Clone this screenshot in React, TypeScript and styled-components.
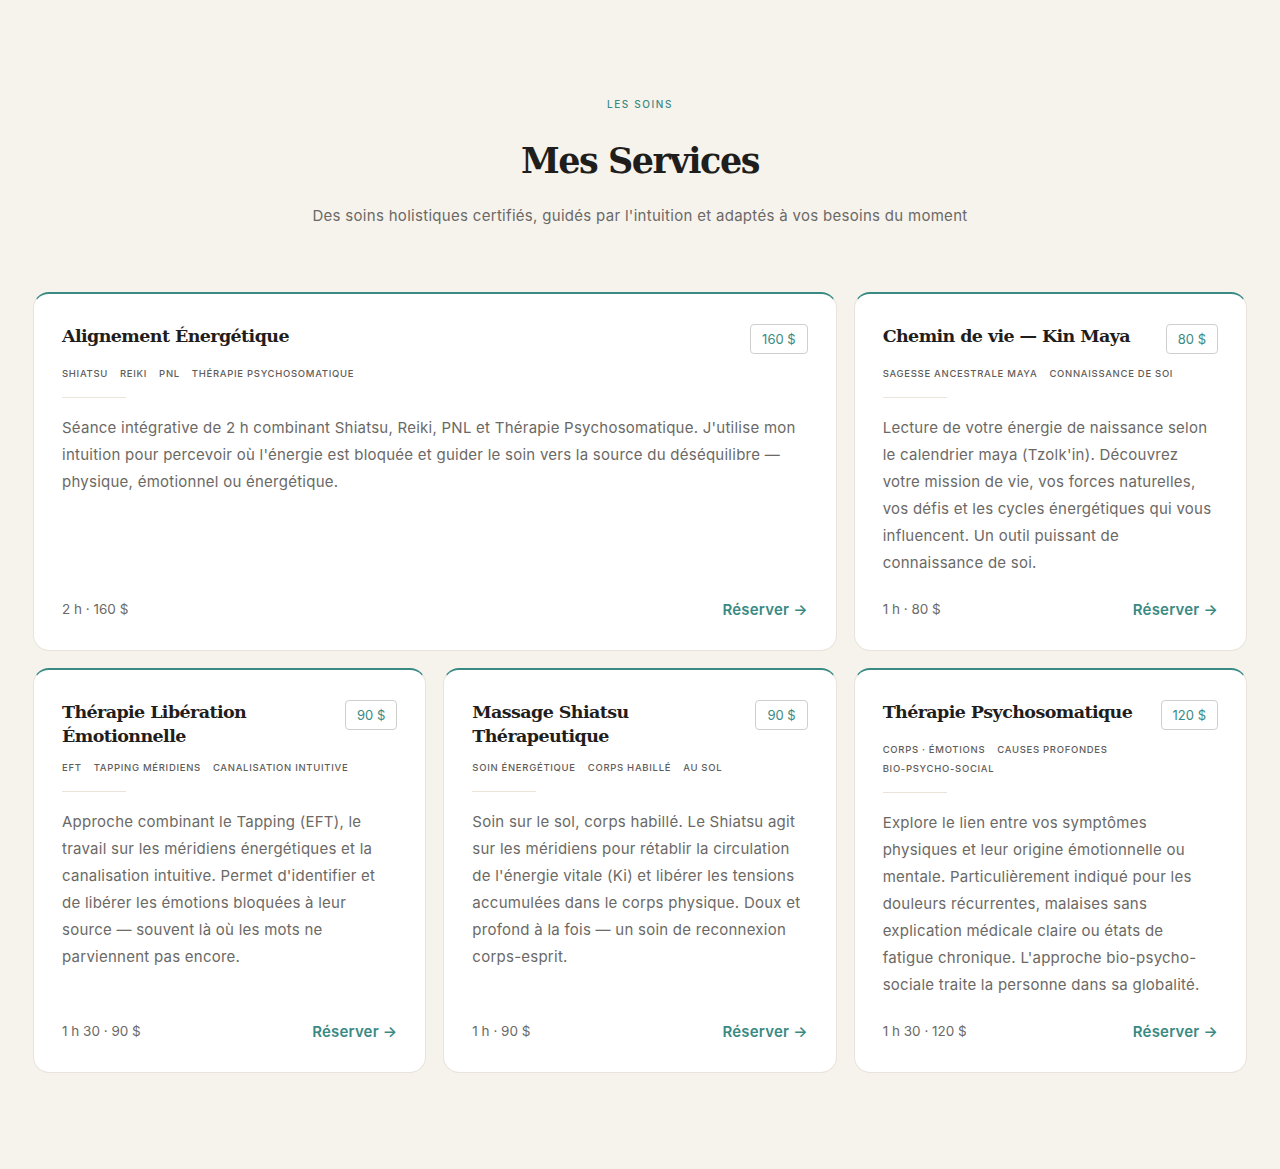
import React from 'react';
import styled, { createGlobalStyle } from 'styled-components';

type Service = {
	id: string;
	title: string;
	price: string;
	tags: string[];
	description: string;
	meta: string;
	wide?: boolean;
};

const services: Service[] = [
	{
		id: 'alignement',
		title: 'Alignement Énergétique',
		price: '160 $',
		tags: ['Shiatsu', 'Reiki', 'PNL', 'Thérapie psychosomatique'],
		description:
			"Séance intégrative de 2 h combinant Shiatsu, Reiki, PNL et Thérapie Psychosomatique. J'utilise mon intuition pour percevoir où l'énergie est bloquée et guider le soin vers la source du déséquilibre — physique, émotionnel ou énergétique.",
		meta: '2 h · 160 $',
		wide: true,
	},
	{
		id: 'kin-maya',
		title: 'Chemin de vie — Kin Maya',
		price: '80 $',
		tags: ['Sagesse ancestrale maya', 'Connaissance de soi'],
		description:
			"Lecture de votre énergie de naissance selon le calendrier maya (Tzolk'in). Découvrez votre mission de vie, vos forces naturelles, vos défis et les cycles énergétiques qui vous influencent. Un outil puissant de connaissance de soi.",
		meta: '1 h · 80 $',
	},
	{
		id: 'eft',
		title: 'Thérapie Libération Émotionnelle',
		price: '90 $',
		tags: ['EFT', 'Tapping méridiens', 'Canalisation intuitive'],
		description:
			"Approche combinant le Tapping (EFT), le travail sur les méridiens énergétiques et la canalisation intuitive. Permet d'identifier et de libérer les émotions bloquées à leur source — souvent là où les mots ne parviennent pas encore.",
		meta: '1 h 30 · 90 $',
	},
	{
		id: 'shiatsu',
		title: 'Massage Shiatsu Thérapeutique',
		price: '90 $',
		tags: ['Soin énergétique', 'Corps habillé', 'Au sol'],
		description:
			"Soin sur le sol, corps habillé. Le Shiatsu agit sur les méridiens pour rétablir la circulation de l'énergie vitale (Ki) et libérer les tensions accumulées dans le corps physique. Doux et profond à la fois — un soin de reconnexion corps-esprit.",
		meta: '1 h · 90 $',
	},
	{
		id: 'psychosomatique',
		title: 'Thérapie Psychosomatique',
		price: '120 $',
		tags: ['Corps · émotions', 'Causes profondes', 'Bio-psycho-social'],
		description:
			"Explore le lien entre vos symptômes physiques et leur origine émotionnelle ou mentale. Particulièrement indiqué pour les douleurs récurrentes, malaises sans explication médicale claire ou états de fatigue chronique. L'approche bio-psycho-sociale traite la personne dans sa globalité.",
		meta: '1 h 30 · 120 $',
	},
];

function App() {
	return (
		<>
			<GlobalStyle />
			<Section>
				<Header>
					<Eyebrow>Les soins</Eyebrow>
					<Title>Mes Services</Title>
					<Lead>
						Des soins holistiques certifiés, guidés par l'intuition et adaptés à vos besoins du moment
					</Lead>
				</Header>
				<Grid>
					{services.map((service) => (
						<Card key={service.id} $wide={service.wide}>
							<CardTop>
								<CardTitle>{service.title}</CardTitle>
								<Price>{service.price}</Price>
							</CardTop>
							<Tags>
								{service.tags.map((tag) => (
									<Tag key={tag}>{tag}</Tag>
								))}
							</Tags>
							<Divider />
							<Description>{service.description}</Description>
							<CardFooter>
								<Meta>{service.meta}</Meta>
								<BookLink href="#">Réserver →</BookLink>
							</CardFooter>
						</Card>
					))}
				</Grid>
			</Section>
		</>
	);
}

const GlobalStyle = createGlobalStyle`
	body {
		margin: 0;
		background: #f6f3ed;
		font-family: Inter, 'Open Sans', sans-serif;
		color: #1f1e1c;
	}
`;

const Section = styled.section`
	padding: 98px 33px 97px;
`;

const Header = styled.header`
	display: flex;
	flex-direction: column;
	align-items: center;
	text-align: center;
	margin-bottom: 67px;
`;

const Eyebrow = styled.span`
	font-size: 10px;
	letter-spacing: 1.6px;
	text-transform: uppercase;
	color: #3a8a84;
	font-weight: 500;
`;

const Title = styled.h2`
	margin: 32px 0 0;
	font-family: 'DejaVu Serif', 'Liberation Serif', serif;
	font-size: 35px;
	font-weight: 700;
	letter-spacing: -1.5px;
	line-height: 1.1;
`;

const Lead = styled.p`
	margin: 25px 0 0;
	font-size: 15px;
	letter-spacing: 0.3px;
	color: #6b6966;
`;

const Grid = styled.div`
	display: grid;
	grid-template-columns: repeat(3, 1fr);
	gap: 17px;
`;

const Card = styled.article<{ $wide?: boolean }>`
	grid-column: ${(p) => (p.$wide ? 'span 2' : 'span 1')};
	display: flex;
	flex-direction: column;
	background: #ffffff;
	border: 1px solid #e9e3db;
	border-top: 2px solid #3a8a84;
	border-radius: 16px;
	padding: 29px 28px 31px;
`;

const CardTop = styled.div`
	display: flex;
	justify-content: space-between;
	align-items: flex-start;
	gap: 20px;
`;

const CardTitle = styled.h3`
	margin: 1px 0 0;
	font-family: 'DejaVu Serif', 'Liberation Serif', serif;
	font-size: 17.5px;
	font-weight: 700;
	letter-spacing: -0.6px;
	line-height: 24px;
`;

const Price = styled.span`
	flex-shrink: 0;
	margin-top: 1px;
	border: 1px solid #cfd0cd;
	border-radius: 4px;
	padding: 7px 11px;
	font-size: 13px;
	color: #3a8a84;
	line-height: 14px;
`;

const Tags = styled.div`
	display: flex;
	flex-wrap: wrap;
	gap: 6px 12px;
	margin-top: 13px;
`;

const Tag = styled.span`
	font-size: 9.5px;
	letter-spacing: 0.7px;
	text-transform: uppercase;
	color: #5f5d5a;
	font-weight: 500;
	line-height: 13px;
`;

const Divider = styled.hr`
	width: 64px;
	margin: 17px 0 0;
	border: none;
	border-top: 1px solid #ebe2d9;
`;

const Description = styled.p`
	margin: 16px 0 0;
	font-size: 15px;
	line-height: 27px;
	letter-spacing: 0.25px;
	color: #6b6966;
`;

const CardFooter = styled.div`
	display: flex;
	justify-content: space-between;
	align-items: center;
	margin-top: auto;
	padding-top: 24px;
`;

const Meta = styled.span`
	font-size: 13.5px;
	color: #6b6966;
`;

const BookLink = styled.a`
	font-size: 15px;
	font-weight: 600;
	letter-spacing: 0.2px;
	color: #3a8a84;
	text-decoration: none;
`;

export default App;
